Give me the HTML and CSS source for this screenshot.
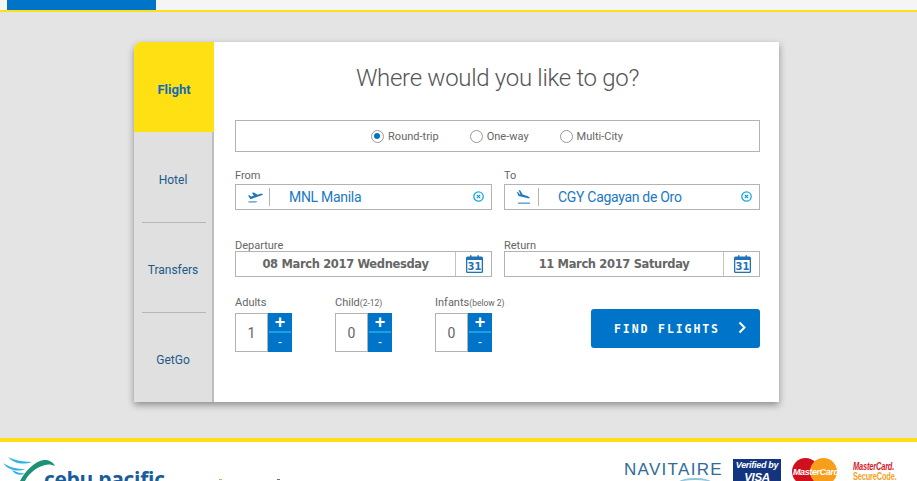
FILE: index.html
```html
<!DOCTYPE html>
<html lang="en">
<head>
<meta charset="utf-8">
<title>Where would you like to go?</title>
<link rel="stylesheet" href="styles.css">
</head>
<body>
<header class="topbar"><div class="topbar-tab"></div></header>
<main class="stage">
  <section class="card">
    <nav class="tabs">
      <a class="tab tab-active">Flight</a>
      <a class="tab">Hotel</a>
      <a class="tab">Transfers</a>
      <a class="tab">GetGo</a>
    </nav>
    <div class="panel">
      <h1 class="title">Where would you like to go?</h1>
      <div class="trip">
        <label class="radio"><span class="dot dot-on"></span>Round-trip</label>
        <label class="radio"><span class="dot"></span>One-way</label>
        <label class="radio"><span class="dot"></span>Multi-City</label>
      </div>
      <div class="row row-route">
        <div class="field">
          <div class="label">From</div>
          <div class="box">
            <span class="plane"><svg width="16" height="13" viewBox="0 0 16 13"><path fill="#1f78bd" d="M1 4.500l1.500-.3 1.500 1.300 2.800-.8L5 1.800 6.800 1.500l3.700 2.300 3-1c1.200-.3 2.200-.2 2.300.3.100.6-.7 1-1.800 1.500L3.500 8.300z"/><path fill="#7fb2da" d="M1.500 10h9l-1.500 1.800H1.500z"/></svg></span>
            <span class="value">MNL Manila</span>
            <span class="clear"><svg width="11" height="11" viewBox="0 0 11 11"><circle cx="5.500" cy="5.500" r="4.700" fill="none" stroke="#1ba9e1" stroke-width="1.300"/><path d="M3.800 3.800l3.400 3.400M7.200 3.800l-3.400 3.400" stroke="#1b8fd0" stroke-width="1.100"/></svg></span>
          </div>
        </div>
        <div class="field">
          <div class="label">To</div>
          <div class="box">
            <span class="plane"><svg width="16" height="15" viewBox="0 0 16 15"><path fill="#1f78bd" d="M2.500 0l1.800.5 2.300 4 3 .9 2.200.8c1.100.5 2.100 1.100 1.900 1.700-.2.500-1.300.4-2.500.1L2.500 6 .8 1.800 2.200 2.200l1.300 2 1 .2z"/><rect x="2" y="12.500" width="12" height="1.300" fill="#4a97d2"/></svg></span>
            <span class="value">CGY Cagayan de Oro</span>
            <span class="clear"><svg width="11" height="11" viewBox="0 0 11 11"><circle cx="5.500" cy="5.500" r="4.700" fill="none" stroke="#1ba9e1" stroke-width="1.300"/><path d="M3.800 3.800l3.400 3.400M7.200 3.800l-3.400 3.400" stroke="#1b8fd0" stroke-width="1.100"/></svg></span>
          </div>
        </div>
      </div>
      <div class="row row-dates">
        <div class="field">
          <div class="label">Departure</div>
          <div class="box box-date">
            <span class="date">08 March 2017 Wednesday</span>
            <span class="cal"><svg width="17" height="18" viewBox="0 0 17 18"><path fill="#1f74b8" d="M1.500 1.500H4V.3h1.500v1.200h6V.3H13v1.200h2.500A1.500 1.500 0 0 1 17 3v13.500a1.500 1.500 0 0 1-1.500 1.500h-14A1.500 1.500 0 0 1 0 16.500V3a1.500 1.500 0 0 1 1.500-1.500z"/><rect x="1.300" y="5" width="14.400" height="11.700" fill="#fff"/><text x="8.500" y="15.200" class="cal-num">31</text></svg></span>
          </div>
        </div>
        <div class="field">
          <div class="label">Return</div>
          <div class="box box-date">
            <span class="date">11 March 2017 Saturday</span>
            <span class="cal"><svg width="17" height="18" viewBox="0 0 17 18"><path fill="#1f74b8" d="M1.500 1.500H4V.3h1.500v1.200h6V.3H13v1.200h2.500A1.500 1.500 0 0 1 17 3v13.500a1.500 1.500 0 0 1-1.500 1.500h-14A1.500 1.500 0 0 1 0 16.500V3a1.500 1.500 0 0 1 1.500-1.500z"/><rect x="1.300" y="5" width="14.400" height="11.700" fill="#fff"/><text x="8.500" y="15.200" class="cal-num">31</text></svg></span>
          </div>
        </div>
      </div>
      <div class="row-pax">
        <div class="pax">
          <div class="label">Adults</div>
          <div class="stepper"><span class="count">1</span><span class="btns"><span class="plus">+</span><span class="minus">-</span></span></div>
        </div>
        <div class="pax">
          <div class="label">Child<small>(2-12)</small></div>
          <div class="stepper"><span class="count">0</span><span class="btns"><span class="plus">+</span><span class="minus">-</span></span></div>
        </div>
        <div class="pax">
          <div class="label">Infants<small>(below 2)</small></div>
          <div class="stepper"><span class="count">0</span><span class="btns"><span class="plus">+</span><span class="minus">-</span></span></div>
        </div>
        <button class="find">FIND FLIGHTS<svg class="chev" width="9" height="13" viewBox="0 0 9 13"><path d="M1.500 1.500l5 5-5 5" fill="none" stroke="#fff" stroke-width="2"/></svg></button>
      </div>
    </div>
  </section>
</main>
<footer class="footer">
  <div class="brand">
    <svg class="wing" width="56" height="26" viewBox="0 0 56 26"><path fill="#2fb2e4" d="M6 0c6 3 13 4.500 24 5-8 3-18 2-24-5zM1 6c7 4.500 14 6 22 6-7 3-16 2-22-6zM10 13c5 2.500 9 3.500 13 3.500-4 2.500-10 1.500-13-3.500z"/><path fill="#1d9078" d="M18 24C23 14 33 4 42 3c5-.5 9 2 11 6-3-1.500-7-2-10-1-9 2-17 9-21 18z"/></svg>
    <span class="cebu">cebu pacific</span>
    <svg class="marks" width="62" height="2" viewBox="0 0 62 2"><rect x="0" y="0" width="3" height="1" fill="#c9b26a"/><rect x="58" y="0" width="3" height="1" fill="#8a6a50"/></svg>
  </div>
  <div class="partners">
    <span class="navitaire">NAVITAIRE</span>
    <span class="visa"><i>Verified by</i><b>VISA</b></span>
    <span class="mc"><span class="mc-red"></span><span class="mc-org"></span><em>MasterCard</em></span>
    <span class="secure"><i>MasterCard.</i><b>SecureCode.</b></span>
  </div>
</footer>
</body>
</html>
```
FILE: styles.css
```css
* { box-sizing: border-box; }
html, body { margin: 0; height: 481px; overflow: hidden; }
body {
  background: #e4e4e4;
  font-family: Roboto, "Open Sans", sans-serif;
  color: #666;
  display: flex;
  flex-direction: column;
}
.topbar {
  height: 12px;
  flex: none;
  background: #f5f5f5;
  border-bottom: 2px solid #fde01a;
  padding-left: 7px;
}
.topbar-tab { width: 149px; height: 10px; background: #0074c8; }
.stage { flex: none; height: 426px; padding: 30px 0 0 134px; }
.card {
  width: 645px;
  height: 360px;
  display: flex;
  background: #fff;
  border-top-left-radius: 8px;
  box-shadow: 0 3px 7px rgba(0,0,0,.38);
}
.tabs { width: 80px; flex: none; display: flex; flex-direction: column; background: #e0e0e0; border-top-left-radius: 8px; overflow: hidden; }
.tab {
  height: 90px;
  display: flex;
  align-items: center;
  justify-content: center;
  font-size: 12px;
  color: #1c5a8a;
  position: relative;
  border-right: 2px solid #bdbdbd;
  padding-top: 5px;
}
.tab + .tab + .tab::before {
  content: "";
  position: absolute;
  left: 8px; right: 6px; top: 0;
  height: 1px;
  background: #b5b5b5;
}
.tab-active { background: #ffe013; color: #0f6cbd; font-weight: 700; border-right: 0; padding-top: 4px; font-size: 13px; }
.panel { flex: 1; padding: 0 19px 0 21px; }
.title {
  margin: 20px 0 25px;
  height: 33px;
  font-size: 24px;
  line-height: 33px;
  font-weight: 300;
  letter-spacing: -.3px;
  text-align: center;
  color: #555;
}
.trip {
  height: 32px;
  border: 1px solid #b3b3b3;
  display: flex;
  align-items: center;
  justify-content: center;
  gap: 31px;
  padding-right: 1px;
  font-size: 11px;
}
.radio { display: flex; align-items: center; gap: 4px; }
.dot { width: 13px; height: 13px; border-radius: 50%; border: 1.500px solid #999; display: block; background: #fff; position: relative; }
.dot-on::after { content: ""; position: absolute; left: 2px; top: 2px; width: 6px; height: 6px; border-radius: 50%; background: #0074c8; }
.row { display: flex; justify-content: space-between; }
.row-route { margin-top: 16px; }
.row-dates { margin-top: 28px; }
.field { width: 257px; }
.row .field + .field { width: 256px; }
.label { font-size: 11px; line-height: 16px; height: 14px; color: #666; margin-bottom: 2px; }
.label small { font-size: 8.500px; }
.row-dates .label { margin-bottom: -1px; }
.box { height: 26px; border: 1px solid #b3b3b3; display: flex; align-items: center; background: #fff; }
.plane { width: 34px; height: 18px; flex: none; border-right: 1px solid #b3b3b3; display: flex; align-items: center; justify-content: center; padding-left: 4px; }
.value { flex: 1; padding-left: 19px; font-size: 14px; letter-spacing: -.3px; color: #1b78c4; }
.clear { width: 18px; flex: none; display: flex; margin-bottom: 2px; }
.box-date .date { flex: 1; text-align: center; font: 700 11.500px "DejaVu Sans", sans-serif; letter-spacing: -.35px; color: #666; }
.cal { width: 36px; height: 100%; flex: none; border-left: 1px solid #c4c4c4; display: flex; align-items: center; justify-content: center; padding: 0 0 1px 1px; }
.cal-num { font: 700 10px "DejaVu Sans", sans-serif; fill: #1f74b8; text-anchor: middle; }
.row-pax { display: flex; margin-top: 18px; position: relative; }
.pax { width: 100px; }
.pax .label { margin-bottom: 4px; }
.stepper { display: flex; width: 57px; height: 39px; }
.count {
  width: 33px;
  border: 1px solid #b3b3b3;
  display: flex;
  align-items: center;
  justify-content: center;
  font-size: 14px;
  color: #666;
}
.btns { width: 24px; display: flex; flex-direction: column; background: #0074c8; color: #fff; }
.plus { height: 18px; text-align: center; font: 700 18px/18px "Liberation Sans", sans-serif; }
.minus { height: 21px; border-top: 2px solid #16a3e0; margin: 0 1px; text-align: center; font: 400 12px/18px "Liberation Sans", sans-serif; }
.find {
  margin-left: auto;
  align-self: flex-start;
  margin-top: 14px;
  width: 169px;
  height: 39px;
  background: #0074c8;
  border: 0;
  border-radius: 3px;
  color: #fff;
  font: 700 11.500px "DejaVu Sans Mono", "DejaVu Sans", monospace;
  letter-spacing: 1.900px;
  display: flex;
  align-items: center;
  padding: 0 0 0 23px;
}
.chev { margin-left: 18px; margin-bottom: 2px; }
.footer {
  flex: 1;
  background: #fff;
  border-top: 4px solid #fde01a;
  display: flex;
  overflow: hidden;
  min-height: 0;
}
.brand { position: relative; padding: 24px 0 0 44px; height: 60px; width: 290px; flex: none; }
.wing { position: absolute; left: 2px; top: 15px; }
.marks { position: absolute; left: 219px; top: 37px; }
.cebu { font: 700 21px/26px "Open Sans", sans-serif; color: #1a5d9c; letter-spacing: -.3px; white-space: nowrap; }
.partners { display: flex; align-items: flex-start; padding-left: 334px; height: 60px; }
.navitaire { position: relative; width: 98px; flex: none; white-space: nowrap; font: 400 17px/20px "Liberation Sans", sans-serif; color: #2e6d99; letter-spacing: 1.300px; margin-top: 18px; }
.navitaire::after { content: ""; position: absolute; left: 54px; top: 18px; width: 34px; height: 8px; border-top: 2px solid #8fc6e0; border-radius: 50%; }
.visa { width: 48px; height: 24px; flex: none; margin: 17px 0 0 11px; background: #13347f; color: #fff; display: flex; flex-direction: column; align-items: center; font: 700 9px/12px "Liberation Sans", sans-serif; letter-spacing: -.3px; white-space: nowrap; }
.visa b { font-size: 11.500px; line-height: 12px; font-style: italic; }
.mc { position: relative; width: 45px; height: 28px; flex: none; margin: 16px 0 0 11px; display: block; }
.mc-red, .mc-org { position: absolute; top: 0; width: 27px; height: 27px; border-radius: 50%; }
.mc-red { left: 0; background: #d0101f; }
.mc-org { left: 18px; background: #f79e1b; }
.mc em { position: absolute; left: 1px; top: 9px; font: italic 700 9px/11px "Liberation Sans", sans-serif; color: #fff; letter-spacing: -.4px; }
.secure { margin: 20px 0 0 16px; flex: none; display: flex; flex-direction: column; font: 700 10px/10px "Liberation Sans", sans-serif; letter-spacing: -.2px; transform: scaleX(.74); transform-origin: left top; }
.secure i { color: #d5202a; }
.secure b { color: #f5a21f; }
```
